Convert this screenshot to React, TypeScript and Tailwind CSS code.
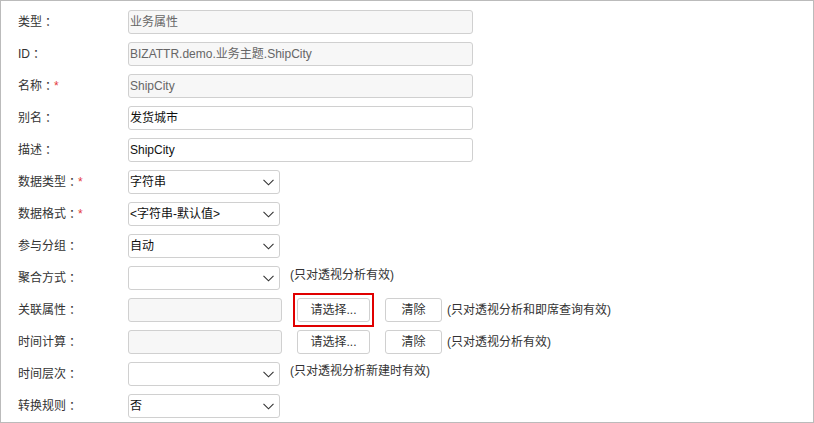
import React from "react";

const font = { fontFamily: '"Liberation Sans", "Noto Sans CJK SC", sans-serif' };
const tc = { fontFamily: '"Noto Sans CJK TC", sans-serif' };

function Label({ text, req }: { text: string; req?: boolean }) {
  return (
    <div className="w-[127px] h-[24px] shrink-0 pl-[17px] text-[12px] text-[#333] flex items-center">
      <span>{text}</span>
      <span style={tc}>：</span>
      {req && <span className="text-[#e4393c]">*</span>}
    </div>
  );
}

function TextBox({ value, disabled, w = "w-[345px]" }: { value: string; disabled?: boolean; w?: string }) {
  return (
    <div
      className={`${w} h-[24px] rounded-[3px] border border-[#d0d0d0] flex items-center pl-[1px] text-[12px] ${
        disabled ? "bg-[#f7f7f7] text-[#666]" : "bg-white text-[#111]"
      }`}
    >
      {value}
    </div>
  );
}

function Chevron() {
  return (
    <svg width="11" height="7" viewBox="0 0 11 7" className="shrink-0">
      <polyline points="0.5,0.8 5.5,5.8 10.5,0.8" fill="none" stroke="#333" strokeWidth="1.1" />
    </svg>
  );
}

function Select({ value }: { value: string }) {
  return (
    <div className="w-[152px] h-[24px] rounded-[3px] border border-[#d0d0d0] bg-white flex items-center justify-between pl-[1px] pr-[5px] text-[12px] text-[#111]">
      <span>{value}</span>
      <Chevron />
    </div>
  );
}

function Note({ text, ml }: { text: string; ml: string }) {
  return <span className={`${ml} h-[24px] text-[12px] text-[#333] leading-[18px] self-start`}>{text}</span>;
}

function Btn({ text, w, red }: { text: string; w: string; red?: boolean }) {
  return (
    <div className={`relative ${w} h-[24px] rounded-[3px] border border-[#d0d0d0] bg-white flex items-center justify-center text-[12px] text-[#333]`}>
      {text}
      {red && <span className="absolute -left-[5px] -right-[5px] -top-[6px] -bottom-[6px] border-2 border-[#e00000]" />}
    </div>
  );
}

export default function App() {
  return (
    <div style={font} className="w-[814px] h-[423px] border border-[#bbb] bg-white overflow-hidden">
      <div className="flex flex-col gap-[8px] pt-[9px]">
        <div className="flex items-center h-[24px]">
          <Label text="类型" />
          <TextBox value="业务属性" disabled />
        </div>
        <div className="flex items-center h-[24px]">
          <Label text="ID" />
          <TextBox value="BIZATTR.demo.业务主题.ShipCity" disabled />
        </div>
        <div className="flex items-center h-[24px]">
          <Label text="名称" req />
          <TextBox value="ShipCity" disabled />
        </div>
        <div className="flex items-center h-[24px]">
          <Label text="别名" />
          <TextBox value="发货城市" />
        </div>
        <div className="flex items-center h-[24px]">
          <Label text="描述" />
          <TextBox value="ShipCity" />
        </div>
        <div className="flex items-center h-[24px]">
          <Label text="数据类型" req />
          <Select value="字符串" />
        </div>
        <div className="flex items-center h-[24px]">
          <Label text="数据格式" req />
          <Select value="<字符串-默认值>" />
        </div>
        <div className="flex items-center h-[24px]">
          <Label text="参与分组" />
          <Select value="自动" />
        </div>
        <div className="flex items-center h-[24px]">
          <Label text="聚合方式" />
          <Select value="" />
          <Note text="(只对透视分析有效)" ml="ml-[10px]" />
        </div>
        <div className="flex items-center h-[24px]">
          <Label text="关联属性" />
          <TextBox value="" disabled w="w-[154px]" />
          <div className="ml-[15px]">
            <Btn text="请选择..." w="w-[73px]" red />
          </div>
          <div className="ml-[15px]">
            <Btn text="清除" w="w-[57px]" />
          </div>
          <span className="ml-[5px] text-[12px] text-[#333]">(只对透视分析和即席查询有效)</span>
        </div>
        <div className="flex items-center h-[24px]">
          <Label text="时间计算" />
          <TextBox value="" disabled w="w-[154px]" />
          <div className="ml-[15px]">
            <Btn text="请选择..." w="w-[73px]" />
          </div>
          <div className="ml-[15px]">
            <Btn text="清除" w="w-[57px]" />
          </div>
          <span className="ml-[5px] text-[12px] text-[#333]">(只对透视分析有效)</span>
        </div>
        <div className="flex items-center h-[24px]">
          <Label text="时间层次" />
          <Select value="" />
          <Note text="(只对透视分析新建时有效)" ml="ml-[10px]" />
        </div>
        <div className="flex items-center h-[24px]">
          <Label text="转换规则" />
          <Select value="否" />
        </div>
      </div>
    </div>
  );
}
